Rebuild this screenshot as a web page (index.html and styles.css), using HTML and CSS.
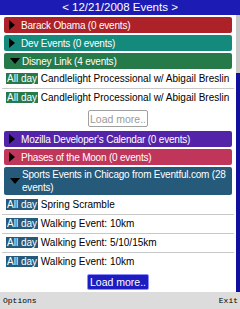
FILE: index.html
```html
<!DOCTYPE html>
<html lang="en">
<head>
    <meta charset="UTF-8">
    <meta name="viewport" content="width=device-width, initial-scale=1.0">
    <title>Events</title>
    <link rel="stylesheet" href="styles.css">
</head>
<body>
    <header class="topbar">&lt; 12/21/2008 Events &gt;</header>
    <div class="screen">
        <main class="content">
            <div class="calendar red"><span class="arrow-right"></span>Barack Obama (0 events)</div>
            <div class="calendar teal"><span class="arrow-right"></span>Dev Events (0 events)</div>
            <div class="calendar green open"><span class="arrow-down"></span>Disney Link (4 events)</div>
            <div class="event"><span class="allday green">All day</span> Candlelight Processional w/ Abigail Breslin</div>
            <div class="event last"><span class="allday green">All day</span> Candlelight Processional w/ Abigail Breslin</div>
            <div class="more"><button class="load">Load more..</button></div>
            <div class="calendar purple"><span class="arrow-right"></span>Mozilla Developer's Calendar (0 events)</div>
            <div class="calendar pink"><span class="arrow-right"></span>Phases of the Moon (0 events)</div>
            <div class="calendar navy open"><span class="arrow-down"></span>Sports Events in Chicago from Eventful.com (28 events)</div>
            <div class="event"><span class="allday navy">All day</span> Spring Scramble</div>
            <div class="event"><span class="allday navy">All day</span> Walking Event: 10km</div>
            <div class="event"><span class="allday navy">All day</span> Walking Event: 5/10/15km</div>
            <div class="event last"><span class="allday navy">All day</span> Walking Event: 10km</div>
            <div class="more"><button class="load active">Load more..</button></div>
        </main>
        <div class="scrollbar">
            <div class="track"></div>
            <div class="thumb"></div>
        </div>
    </div>
    <footer class="softkeys">
        <span>Options</span>
        <span>Exit</span>
    </footer>
</body>
</html>
```

FILE: styles.css
```css
* {
    box-sizing: border-box;
}

body {
    margin: 0;
    width: 240px;
    height: 309px;
    overflow: hidden;
    display: flex;
    flex-direction: column;
    background-color: #fff;
    font-family: "Liberation Sans", Arial, sans-serif;
    font-size: 10px;
    color: #000;
}

.topbar {
    height: 15px;
    line-height: 15px;
    background-color: #1c1cb4;
    color: #fff;
    text-align: center;
    font-size: 11.5px;
}

.screen {
    flex: 1;
    display: flex;
    overflow: hidden;
}

.content {
    flex: 1;
    padding-top: 2px;
    overflow: hidden;
}

.scrollbar {
    width: 4px;
    display: flex;
    flex-direction: column;
}

.scrollbar .track {
    height: 58px;
    background-color: #c8c8c8;
}

.scrollbar .thumb {
    flex: 1;
    background-color: #10109c;
}

.calendar {
    display: flex;
    align-items: center;
    min-height: 16px;
    margin: 0 0 2px 4px;
    width: 228px;
    padding: 1px 1px 1px 5px;
    border-radius: 2px;
    color: #fff;
    font-size: 10px;
    line-height: 13px;
    letter-spacing: -0.2px;
}

.calendar.open {
    margin-bottom: 1px;
}

.arrow-right {
    flex: none;
    width: 0;
    height: 0;
    margin-right: 6px;
    border-top: 5px solid transparent;
    border-bottom: 5px solid transparent;
    border-left: 6px solid #000;
}

.arrow-down {
    flex: none;
    width: 0;
    height: 0;
    margin: 0 2px 0 1px;
    border-left: 5px solid transparent;
    border-right: 5px solid transparent;
    border-top: 6px solid #000;
}

.red { background-color: #ad2228; }
.teal { background-color: #138a7c; }
.green { background-color: #267a4a; }
.purple { background-color: #5424a8; }
.pink { background-color: #c0365a; }
.navy { background-color: #255a7a; }

.event {
    margin: 0 2px;
    padding: 3px 0 4px 4px;
    border-bottom: 1px solid #c8c8c8;
    height: 19px;
    line-height: 11px;
    white-space: nowrap;
    font-size: 10px;
}

.event.last {
    border-bottom: none;
}

.allday {
    display: inline-block;
    height: 11px;
    padding: 0 1px;
    color: #fff;
}

.more {
    display: flex;
    justify-content: center;
    padding: 2px 0 4px;
}

.load {
    height: 17px;
    width: 60px;
    padding: 0;
    border: 1px solid #a0a0a0;
    border-radius: 2px;
    background-color: #fff;
    color: #9a9a9a;
    font-family: "Liberation Sans", Arial, sans-serif;
    font-size: 10.5px;
}

.load.active {
    width: 62px;
    height: 16px;
    border-color: #8c8cff;
    background-color: #1c1cc0;
    color: #fff;
}

.softkeys {
    height: 17px;
    display: flex;
    justify-content: space-between;
    align-items: center;
    padding: 0 2px 0 3px;
    background-color: #dcdcdc;
    font-family: "Liberation Mono", "Courier New", monospace;
    font-size: 8px;
}
```
